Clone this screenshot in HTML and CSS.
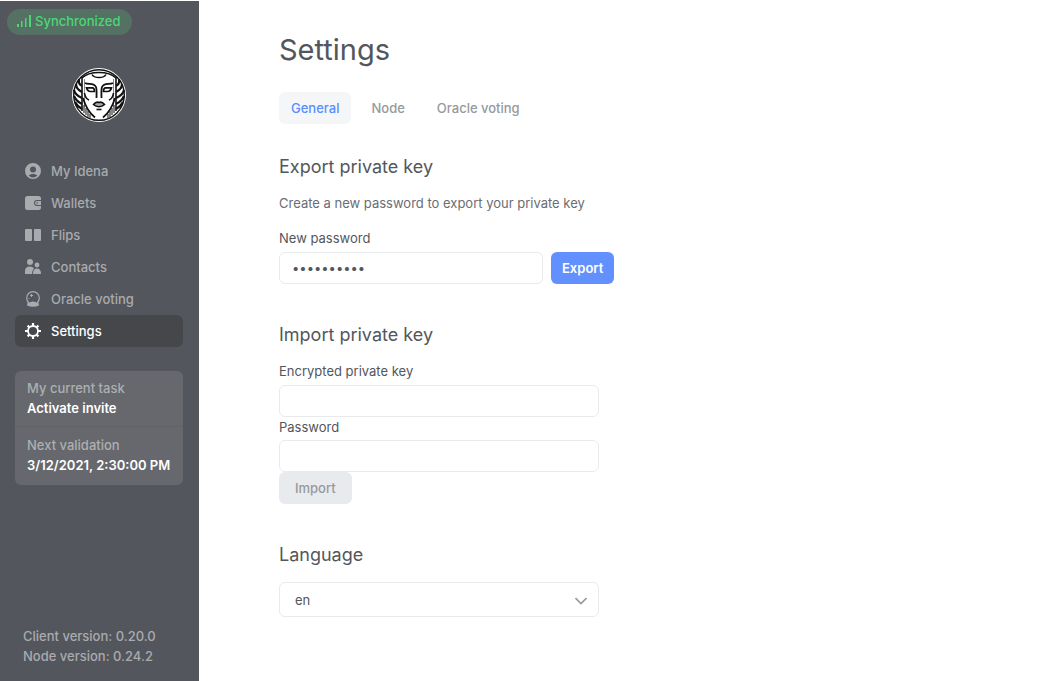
FILE: index.html
```html
<!DOCTYPE html>
<html lang="en">
<head>
<meta charset="utf-8">
<title>Settings</title>
<link rel="stylesheet" href="styles.css">
</head>
<body>
<div class="app">
  <aside class="sidebar">
    <div class="status">
      <svg width="16" height="14" viewBox="0 0 16 14" fill="#4bd778" aria-hidden="true"><path d="M1 10h2v3H1zM5 7h1.500v6H5zM9 4h1.500v9H9zM13 1h2v12h-2z"/></svg>
      <span>Synchronized</span>
    </div>
    <svg class="logo" width="56" height="56" viewBox="0 0 56 56" fill="none" stroke="#111" stroke-width="1.6" aria-label="Idena" role="img">
      <circle cx="28" cy="28" r="27" fill="#fff" stroke="none"/>
      <circle cx="28" cy="28" r="25.300" stroke-width="1.400"/>
      <path d="M11 11C15 7 21 5.500 28 5.500S41 7 45 11"/>
      <path d="M11 10v34M45 10v34"/>
      <path d="M13.500 12v28M42.500 12v28" stroke-width=".5"/>
      <path d="M21 7.500c2 4 12 4 14 0"/>
      <path d="M14 16c3 2 9-.5 11 4 1 3 .5 7 .5 11M42 16c-3 2-9-.5-11 4-1 3-.5 7-.5 11" stroke-width="1.800"/>
      <path d="M15.500 20.800h6q2 0 2 3.700h-4q-3 0-4-3.700zM40.500 20.800h-6q-2 0-2 3.700h4q3 0 4-3.700z" stroke-width="1.700"/>
      <path d="M13.500 26c.5 4 2 6 4.500 7M42.500 26c-.5 4-2 6-4.500 7"/>
      <path d="M12 31c2 7 5 14 12 19.500M44 31c-2 7-5 14-12 19.500" stroke-width="1.800"/>
      <path d="M22.500 37.500c2-2.500 4-2.800 5.500-2 1.500-.8 3.500-.5 5.500 2-3 3-8 3-11 0z" fill="#aaa"/>
      <path d="M25.500 42.500h5"/>
      <path d="M8 12q-1 5 3 7M5 17q0 5 6 8M3 23q1 5 8 8M3 29q2 5 8 8M4 35q2 4 7 7M48 12q1 5-3 7M51 17q0 5-6 8M53 23q-1 5-8 8M53 29q-2 5-8 8M52 35q-2 4-7 7" stroke-width="2.200"/>
      <path d="M13 38v8M15 41v7M17 44v6M19 47v4M43 38v8M41 41v7M39 44v6M37 47v4" stroke="#333" stroke-width="1.200"/>
    </svg>
    <nav class="nav">
      <a href="#"><svg viewBox="0 0 16 16" fill="currentColor"><path fill-rule="evenodd" d="M8 0a8 8 0 1 1 0 16A8 8 0 0 1 8 0zm0 3.500a3 3 0 1 0 0 6 3 3 0 0 0 0-6zM3.600 12.600c2.600 2.600 6.200 2.600 8.800 0-1.700-2.300-7.100-2.300-8.800 0z"/></svg>My Idena</a>
      <a href="#"><svg viewBox="0 0 16 16" fill="currentColor"><path d="M2.500 1h11Q16 1 16 3.500V5h-4q-3 0-3 3t3 3h4v1.500q0 2.500-2.500 2.500h-11Q0 15 0 12.500v-9Q0 1 2.500 1z"/><path fill-rule="evenodd" d="M12 6h4v4h-4q-2 0-2-2t2-2zm.2 1.200a.8.8 0 1 0 0 1.600.8.8 0 0 0 0-1.600z"/></svg>Wallets</a>
      <a href="#"><svg viewBox="0 0 16 16" fill="currentColor"><rect y="2" width="7" height="12" rx="1"/><rect x="9" y="2" width="7" height="12" rx="1"/></svg>Flips</a>
      <a href="#"><svg viewBox="0 0 16 16" fill="currentColor"><circle cx="5" cy="3" r="3"/><circle cx="12" cy="6" r="2.400"/><path d="M0 15v-3q0-4.500 5-4.500 3 0 4 2-2 2-2 5.500zM8 15q0-5.500 4-5.500t4 5.500z"/></svg>Contacts</a>
      <a href="#"><svg viewBox="0 0 16 16" fill="none" stroke="currentColor"><circle cx="8" cy="7" r="6.300" stroke-width="1.200"/><path d="M2.500 11.500q2 1.500 3-.5 2.500-1 5 0 1 2 3 .5l.5 3q-6 2.500-12 0z" fill="currentColor" stroke="none"/><path d="M6.500 3v3M5 4.500h3M3.500 7.500h1"/></svg>Oracle voting</a>
      <a href="#" class="active" aria-current="page"><svg viewBox="0 0 16 16" fill="none" stroke="currentColor"><circle cx="8" cy="8" r="5" stroke-width="1.800"/><path d="M8 0v3M8 13v3M0 8h3M13 8h3M2.600 2.600l1.700 1.700M11.700 11.700l1.700 1.700M13.400 2.600l-1.700 1.700M2.600 13.400l1.700-1.700" stroke-width="2.200"/></svg>Settings</a>
    </nav>
    <dl class="tasks">
      <div><dt>My current task</dt><dd>Activate invite</dd></div>
      <div><dt>Next validation</dt><dd>3/12/2021, 2:30:00 PM</dd></div>
    </dl>
    <footer class="versions"><div>Client version: 0.20.0</div><div>Node version: 0.24.2</div></footer>
  </aside>
  <main class="content">
    <h1>Settings</h1>
    <div class="tabs">
      <button type="button" class="tab selected">General</button>
      <button type="button" class="tab">Node</button>
      <button type="button" class="tab">Oracle voting</button>
    </div>
    <section class="export">
      <h2>Export private key</h2>
      <p>Create a new password to export your private key</p>
      <form>
        <label for="newpass">New password</label>
        <div class="row">
          <input id="newpass" class="field narrow" type="password" value="password12">
          <button type="button" class="primary">Export</button>
        </div>
      </form>
    </section>
    <section class="import">
      <h2>Import private key</h2>
      <form>
        <label for="key">Encrypted private key</label>
        <input id="key" class="field" type="text">
        <label for="pass">Password</label>
        <input id="pass" class="field" type="password">
        <button type="button" class="secondary" disabled>Import</button>
      </form>
    </section>
    <section class="language">
      <h2 id="lang">Language</h2>
      <div class="select">
        <select aria-labelledby="lang"><option>en</option></select>
        <svg width="12" height="8" viewBox="0 0 12 8" fill="none" stroke="#96999e" stroke-width="1.600" aria-hidden="true"><path d="M.5 1L6 6.500 11.500 1"/></svg>
      </div>
    </section>
  </main>
</div>
</body>
</html>
```
FILE: styles.css
```css
* {
  box-sizing: border-box;
}
body {
  margin: 0;
  padding-top: 1px;
  background: #fff;
  color: #53565c;
  font: 400 13px/20px Inter, "Liberation Sans", sans-serif;
}
button, input, select {
  font: inherit;
  color: inherit;
}
h1, h2, p, dl, dd {
  margin: 0;
  font-weight: 400;
}
.app {
  display: flex;
  min-height: calc(100vh - 1px);
}
.sidebar {
  display: flex;
  flex-direction: column;
  flex: none;
  width: 199px;
  padding: 8px 16px 15px 15px;
  background: #53565c;
  color: #a9abae;
  font-weight: 500;
}
.status {
  display: flex;
  align-items: center;
  align-self: flex-start;
  gap: 3px;
  height: 26px;
  margin-left: -8px;
  padding: 0 12px 2px 9px;
  border-radius: 13px;
  background: #557163;
  color: #4bd778;
}
.logo {
  align-self: center;
  margin: 32px 0;
}
.nav a {
  display: flex;
  align-items: center;
  gap: 10px;
  height: 32px;
  padding: 0 10px;
  border-radius: 6px;
  color: inherit;
  text-decoration: none;
}
.nav svg {
  width: 16px;
  height: 16px;
}
.nav .active {
  background: #46474b;
  color: #fff;
}
.tasks {
  margin-top: 24px;
  border-radius: 6px;
  background: #66686d;
}
.tasks div {
  padding: 7px 12px 8px;
}
.tasks div + div {
  padding-top: 8px;
  padding-bottom: 10px;
  border-top: 1px solid #606268;
}
.tasks dd {
  color: #fff;
  font-weight: 600;
  white-space: nowrap;
}
.tasks dt {
  color: #adafb2;
  font-weight: 500;
}
.versions {
  margin-top: auto;
  padding-left: 8px;
}
.content {
  flex: 1;
  padding: 31px 80px;
}
h1 {
  font-size: 29px;
  line-height: 36px;
}
h2 {
  font-size: 18px;
  line-height: 24px;
}
.tabs {
  display: flex;
  gap: 8px;
  margin-top: 24px;
}
.tab {
  height: 32px;
  padding: 0 12px;
  border: 0;
  border-radius: 6px;
  background: transparent;
  color: #96999e;
  font-weight: 500;
}
.selected {
  background: #f5f6f7;
  color: #578fff;
}
.export {
  margin-top: 31px;
}
.export p {
  margin: 14px 0 15px;
  color: #6a6d73;
}
label {
  display: block;
  margin-bottom: 4px;
}
.row {
  display: flex;
  gap: 8px;
}
.field {
  display: block;
  width: 100%;
  max-width: 320px;
  height: 32px;
  padding: 0 12px;
  border: 1px solid #e8eaed;
  border-radius: 6px;
  background: #fff;
}
.narrow {
  max-width: 264px;
}
.primary, .secondary {
  height: 32px;
  border: 0;
  border-radius: 6px;
}
.primary {
  padding: 0 11px;
  background: #6290ff;
  color: #fff;
  font-weight: 600;
}
.secondary {
  padding: 0 16px;
  background: #e8eaed;
  color: #96999e;
  font-weight: 500;
}
.import {
  margin-top: 39px;
}
.import h2 {
  margin-bottom: 14px;
}
.import .field + label {
  margin-bottom: 3px;
}
.language {
  margin-top: 39px;
}
.language h2 {
  margin-bottom: 15px;
}
.select {
  display: grid;
  align-items: center;
  max-width: 320px;
}
.select > * {
  grid-area: 1 / 1;
}
.select select {
  appearance: none;
  height: 35px;
  padding: 0 15px;
  border: 1px solid #e8eaed;
  border-radius: 6px;
  background: #fff;
}
.select svg {
  justify-self: end;
  margin: 2px 12px 0 0;
  pointer-events: none;
}
```
